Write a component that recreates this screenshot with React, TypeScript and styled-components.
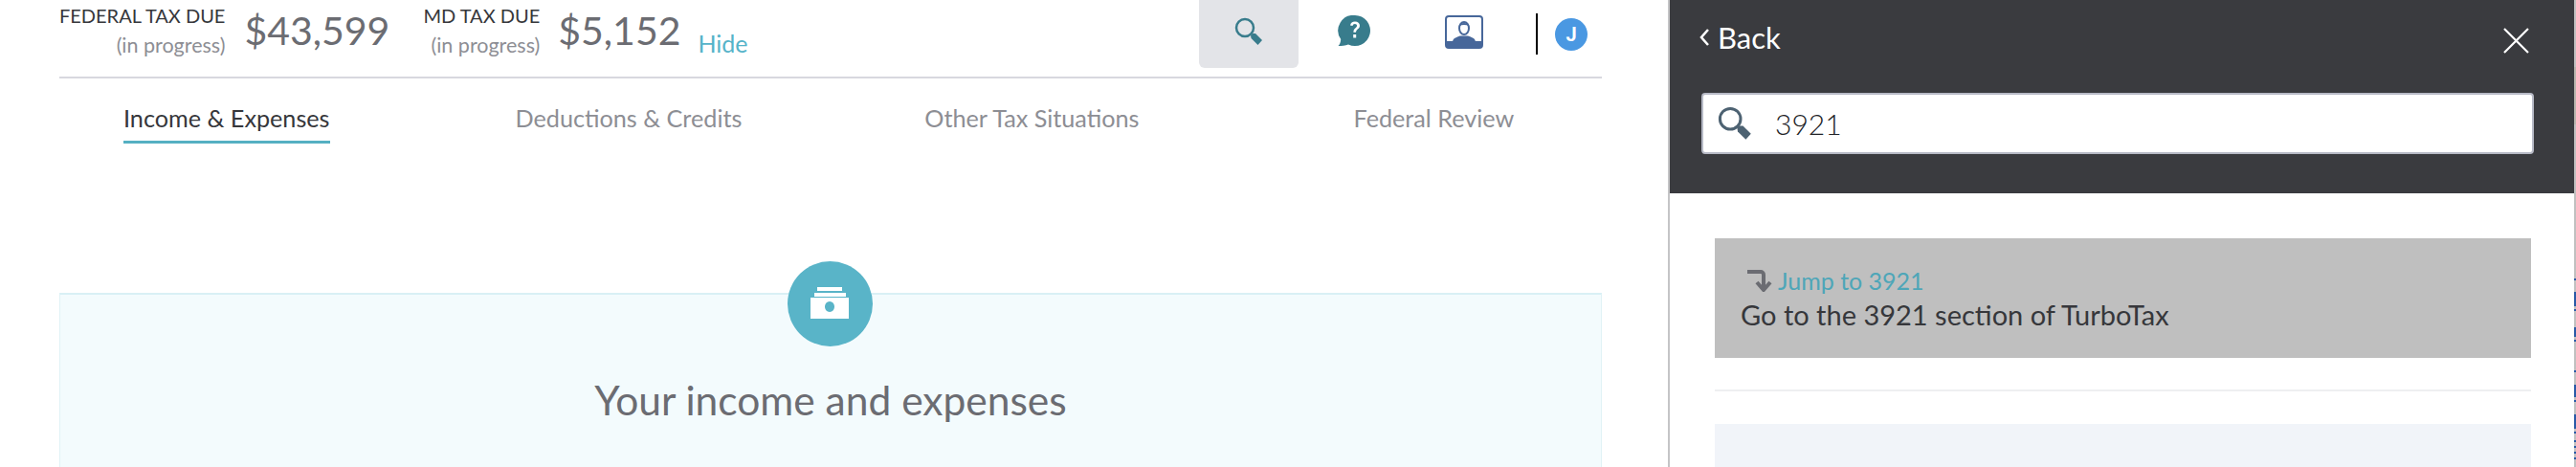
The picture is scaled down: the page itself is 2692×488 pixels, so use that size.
import React from "react";
import styled, { createGlobalStyle } from "styled-components";

const Global = createGlobalStyle`
  html, body { margin: 0; padding: 0; background: #fff; }
  body { font-family: "Lato", "Liberation Sans", sans-serif; }
`;

const Page = styled.div`
  display: flex;
  width: 2692px;
  height: 488px;
  overflow: hidden;
`;

const Main = styled.main`
  width: 1743px;
  flex: none;
  box-sizing: border-box;
  padding: 0 69px 0 62px;
`;

const TopBar = styled.header`
  height: 80px;
  display: flex;
  align-items: flex-start;
  border-bottom: 2px solid #d8d8df;
`;

const Summary = styled.div`
  display: flex;
  flex: 1;
  padding-top: 9px;
`;

const DueLabel = styled.div<{ $gap: number }>`
  text-align: right;
  margin-right: ${(p) => p.$gap}px;
`;

const DueTitle = styled.div`
  font-size: 20px;
  line-height: 22px;
  margin-top: -4px;
  color: #36373b;
`;

const DueNote = styled.div`
  font-size: 21.5px;
  line-height: 26px;
  margin-top: 7px;
  color: #8d8e94;
`;

const Amount = styled.div<{ $gap: number }>`
  font-size: 41px;
  line-height: 46px;
  color: #6b6c72;
  margin-right: ${(p) => p.$gap}px;
`;

const HideLink = styled.a`
  font-size: 25px;
  line-height: 30px;
  margin-top: 21px;
  color: #55b3c9;
`;

const Tools = styled.div`
  display: flex;
  align-items: flex-start;
  width: 421px;
  flex: none;
`;

const SearchTool = styled.div`
  width: 104px;
  height: 71px;
  background: #e3e4e8;
  border-radius: 0 0 6px 6px;
  display: flex;
  justify-content: center;
  padding-top: 18px;
  box-sizing: border-box;
  margin-right: 41px;
`;

const ToolIcon = styled.div<{ $top: number; $right: number }>`
  margin-top: ${(p) => p.$top}px;
  margin-right: ${(p) => p.$right}px;
  display: flex;
`;

const Divider = styled.div`
  width: 2px;
  height: 43px;
  background: #000;
  margin: 14px 18px 0 -1px;
`;

const Avatar = styled.div`
  width: 34px;
  height: 34px;
  border-radius: 50%;
  background: #4a98e2;
  color: #fff;
  font: 700 20px/34px "Roboto", sans-serif;
  text-align: center;
  margin-top: 19px;
`;

const Tabs = styled.nav`
  height: 68px;
  display: flex;
  padding-left: 67px;
`;

const Tab = styled.a<{ $active?: boolean; $gap: number }>`
  font-size: 25.2px;
  height: 68px;
  box-sizing: border-box;
  line-height: 32px;
  padding-top: 25px;
  margin-right: ${(p) => p.$gap}px;
  color: ${(p) => (p.$active ? "#36373b" : "#8d8e94")};
  border-bottom: 3px solid ${(p) => (p.$active ? "#55b0c2" : "transparent")};
  white-space: nowrap;
`;

const Card = styled.section`
  position: relative;
  margin-top: 156px;
  height: 400px;
  background: #f3fbfd;
  border: 1px solid #e0f2f6;
  border-top: 2px solid #d9f0f5;
  text-align: center;
`;

const Badge = styled.div`
  position: absolute;
  left: 760px;
  top: -35px;
  width: 89px;
  height: 89px;
  border-radius: 50%;
  background: #59b4c8;
  display: flex;
  align-items: center;
  justify-content: center;
`;

const CardTitle = styled.h2`
  margin: 87px 0 0;
  font-size: 42.5px;
  line-height: 46px;
  font-weight: 400;
  color: #6b6c72;
`;

const Panel = styled.aside`
  flex: 1;
  border-left: 2px solid #c4c4c6;
  display: flex;
  flex-direction: column;
`;

const PanelHead = styled.div`
  height: 202px;
  flex: none;
  background: #3a3b3f;
  box-sizing: border-box;
  padding: 0 42px 0 33px;
  color: #fff;
`;

const HeadRow = styled.div`
  height: 97px;
  display: flex;
  justify-content: space-between;
  align-items: flex-start;
`;

const BackLink = styled.a`
  display: flex;
  align-items: center;
  gap: 8px;
  font-size: 31px;
  line-height: 36px;
  margin-top: 21px;
  margin-left: -3px;
`;

const CloseBtn = styled.button`
  all: unset;
  display: flex;
  margin: 29px 5px 0 0;
`;

const SearchBox = styled.div`
  height: 64px;
  width: 870px;
  box-sizing: border-box;
  background: #fff;
  border: 2px solid #b7bac6;
  border-radius: 4px;
  display: flex;
  align-items: center;
  padding-left: 15px;
  gap: 24px;
  font-size: 30px;
  color: #222327;
  font-weight: 300;
`;

const PanelBody = styled.div`
  flex: 1;
  padding: 47px 45px 0 47px;
`;

const Result = styled.div`
  height: 125px;
  box-sizing: border-box;
  background: #bfbfbf;
  padding: 29px 0 0 27px;
`;

const JumpRow = styled.div`
  display: flex;
  align-items: center;
  gap: 5px;
  padding-left: 6px;
  font-size: 25px;
  line-height: 30px;
  color: #4ea6b8;
`;

const ResultText = styled.div`
  font-size: 29px;
  line-height: 34px;
  color: #36373b;
  margin-top: 4px;
`;

const Rule = styled.div`
  height: 2px;
  background: #eeeff1;
  margin-top: 33px;
`;

const NextResult = styled.div`
  height: 60px;
  background: #f1f4f9;
  margin-top: 34px;
`;

const EdgeStrip = styled.div`
  width: 2px;
  flex: none;
  background:
    linear-gradient(#b9b6ae 0 0) 0 70px / 2px 60px no-repeat,
    linear-gradient(#2a5aa6 0 0) 0 291px / 2px 2px no-repeat,
    linear-gradient(#2a5aa6 0 0) 0 305px / 2px 15px no-repeat,
    linear-gradient(#2a5aa6 0 0) 0 323px / 2px 2px no-repeat,
    linear-gradient(#2a5aa6 0 0) 0 342px / 2px 10px no-repeat,
    linear-gradient(#2a5aa6 0 0) 0 355px / 2px 2px no-repeat,
    linear-gradient(#2a5aa6 0 0) 0 387px / 2px 2px no-repeat,
    linear-gradient(#2a5aa6 0 0) 0 402px / 2px 13px no-repeat,
    linear-gradient(#2a5aa6 0 0) 0 418px / 2px 2px no-repeat,
    linear-gradient(#2a5aa6 0 0) 0 433px / 2px 15px no-repeat,
    linear-gradient(#2a5aa6 0 0) 0 451px / 2px 2px no-repeat,
    linear-gradient(#2a5aa6 0 0) 0 460px / 2px 2px no-repeat,
    linear-gradient(#2a5aa6 0 0) 0 466px / 2px 2px no-repeat,
    linear-gradient(#2a5aa6 0 0) 0 472px / 2px 2px no-repeat,
    linear-gradient(#2a5aa6 0 0) 0 478px / 2px 2px no-repeat,
    #c0c0c0;
`;

const Magnifier = ({ size, color }: { size: number; color: string }) => (
  <svg width={size} height={size} viewBox="0 0 30 30" fill="none">
    <circle cx="11" cy="11" r="9" stroke={color} strokeWidth="2.500" />
    <path d="M17 19l2-2 3 0 7 7-4.500 5-7-7z" fill={color} />
  </svg>
);

const HelpIcon = () => (
  <svg width="34" height="32" viewBox="0 0 34 32">
    <path d="M18 0a16 16 0 1 1-7 30.400C8 31.500 4 32 .5 32c1.600-1.500 2.500-3.600 2.700-7A16 16 0 0 1 18 0z" fill="#387c8c" />
    <path d="M13 10.500c.5-2.600 2.300-4 5-4 2.900 0 5 1.700 5 4.300 0 3.700-4 3.600-4 7h-2.600c0-4.500 3.700-4.500 3.700-7 0-1.100-.9-1.900-2.200-1.900s-2.100.8-2.400 2.100zM16.200 20h3v3.400h-3z" fill="#fff" />
  </svg>
);

const VideoIcon = () => (
  <svg width="40" height="35" viewBox="0 0 40 35">
    <rect x="1" y="1" width="38" height="33" rx="3" fill="#fff" stroke="#47679a" strokeWidth="2" />
    <path d="M1 27h38v4a3 3 0 0 1-3 3H4a3 3 0 0 1-3-3z" fill="#47679a" />
    <path d="M8 28c0-4 4-5 8-6.500h8C28 23 32 24 32 28z" fill="#47679a" />
    <ellipse cx="20" cy="13.500" rx="5" ry="6.500" fill="#fff" stroke="#47679a" strokeWidth="2" />
    <path d="M15 11c1-4 9-4 10 0-3-1.500-7-1.500-10 0z" fill="#47679a" />
  </svg>
);

const CashIcon = () => (
  <svg width="42" height="36" viewBox="0 0 42 36" fill="#fff">
    <rect x="7" y="0" width="26" height="4" />
    <rect x="4" y="6" width="33" height="4" />
    <path fillRule="evenodd" d="M0 11h40v22H0zM20 15a5 5.500 0 1 0 .01 0z" />
  </svg>
);

const JumpArrow = () => (
  <svg width="28" height="24" viewBox="0 0 28 24" fill="none">
    <path d="M1 3h14a3 3 0 0 1 3 3v13" stroke="#6b6c72" strokeWidth="4" />
    <path d="M11 14l7 8 7-8" stroke="#6b6c72" strokeWidth="4" />
  </svg>
);

export default function App() {
  return (
    <Page>
      <Global />
      <Main>
        <TopBar>
          <Summary>
            <DueLabel $gap={20}>
              <DueTitle>FEDERAL TAX DUE</DueTitle>
              <DueNote>(in progress)</DueNote>
            </DueLabel>
            <Amount $gap={35}>$43,599</Amount>
            <DueLabel $gap={19}>
              <DueTitle>MD TAX DUE</DueTitle>
              <DueNote>(in progress)</DueNote>
            </DueLabel>
            <Amount $gap={18}>$5,152</Amount>
            <HideLink>Hide</HideLink>
          </Summary>
          <Tools>
            <SearchTool>
              <Magnifier size={30} color="#387c8c" />
            </SearchTool>
            <ToolIcon $top={16} $right={78}>
              <HelpIcon />
            </ToolIcon>
            <ToolIcon $top={16} $right={56}>
              <VideoIcon />
            </ToolIcon>
            <Divider />
            <Avatar>J</Avatar>
          </Tools>
        </TopBar>
        <Tabs>
          <Tab $active $gap={194}>Income &amp; Expenses</Tab>
          <Tab $gap={191}>Deductions &amp; Credits</Tab>
          <Tab $gap={224}>Other Tax Situations</Tab>
          <Tab $gap={0}>Federal Review</Tab>
        </Tabs>
        <Card>
          <Badge>
            <CashIcon />
          </Badge>
          <CardTitle>Your income and expenses</CardTitle>
        </Card>
      </Main>
      <Panel>
        <PanelHead>
          <HeadRow>
            <BackLink>
              <svg width="12" height="22" viewBox="0 0 12 22" fill="none">
                <path d="M10 3l-7 8 7 8" stroke="#fff" strokeWidth="2.500" />
              </svg>
              Back
            </BackLink>
            <CloseBtn>
              <svg width="27" height="27" viewBox="0 0 27 27" fill="none">
                <path d="M1 1l25 25M26 1L1 26" stroke="#fff" strokeWidth="2.200" />
              </svg>
            </CloseBtn>
          </HeadRow>
          <SearchBox>
            <Magnifier size={36} color="#4d6272" />
            <span>3921</span>
          </SearchBox>
        </PanelHead>
        <PanelBody>
          <Result>
            <JumpRow>
              <JumpArrow />
              Jump to 3921
            </JumpRow>
            <ResultText>Go to the 3921 section of TurboTax</ResultText>
          </Result>
          <Rule />
          <NextResult />
        </PanelBody>
      </Panel>
      <EdgeStrip />
    </Page>
  );
}
